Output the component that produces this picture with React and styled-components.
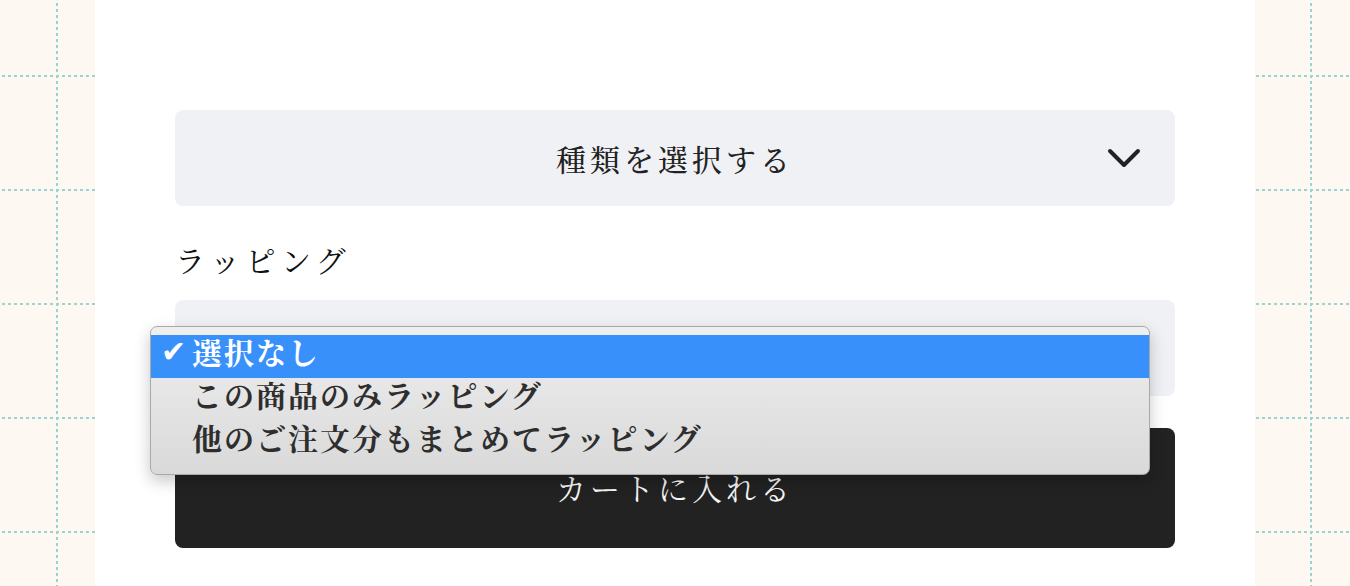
import React from 'react';
import styled, { createGlobalStyle } from 'styled-components';

const gridTile = encodeURIComponent(
  `<svg xmlns="http://www.w3.org/2000/svg" width="114" height="114">` +
    `<g stroke="#9ad4d1" stroke-width="2" stroke-dasharray="3 3" fill="none">` +
    `<line x1="1" y1="0" x2="1" y2="114"/>` +
    `<line x1="0" y1="1" x2="114" y2="1"/>` +
    `</g></svg>`
);

const GlobalStyle = createGlobalStyle`
  html, body {
    margin: 0;
    padding: 0;
  }
  body {
    background-color: #fdf8f1;
    background-image: url("data:image/svg+xml,${gridTile}");
    background-position: 56px 75px;
    font-family: "Noto Serif CJK JP", "Noto Sans CJK JP", serif;
    color: #222;
  }
`;

const Page = styled.div`
  display: flex;
  justify-content: center;
  min-height: 586px;
`;

const Panel = styled.main`
  width: 1160px;
  background: #fff;
  padding: 110px 80px 40px;
  box-sizing: border-box;
`;

const SelectBox = styled.div`
  position: relative;
  display: grid;
  grid-template-columns: 1fr auto 1fr;
  align-items: center;
  height: 96px;
  padding: 0 34px;
  box-sizing: border-box;
  background: #f0f1f5;
  border-radius: 8px;
  font-size: 30px;
  font-weight: 500;
  letter-spacing: 4px;
  color: #222;
`;

const SelectText = styled.span`
  grid-column: 2;
  line-height: 1;
`;

const Chevron = styled.svg`
  grid-column: 3;
  justify-self: end;
  width: 34px;
  height: 22px;
`;

const Label = styled.div`
  margin: 32px 0 20px 0;
  font-size: 30px;
  line-height: 42px;
  letter-spacing: 5.5px;
  color: #111;
`;

const Menu = styled.ul`
  position: absolute;
  top: 26px;
  left: -25px;
  width: 1000px;
  margin: 0;
  padding: 8px 0 10px;
  list-style: none;
  box-sizing: border-box;
  background: linear-gradient(#efefef, #d9d9d9);
  border: 1px solid #a9a9a9;
  border-radius: 7px;
  box-shadow: 0 6px 16px rgba(0, 0, 0, 0.22);
  z-index: 2;
  letter-spacing: 2px;
`;

const Option = styled.li`
  display: flex;
  align-items: center;
  height: 43px;
  padding: 0 0 11px 10px;
  box-sizing: border-box;
  font-size: 30px;
  font-weight: 700;
  color: ${(p) => (p.$active ? '#fff' : '#2e2e2e')};
  background: ${(p) => (p.$active ? '#3890fa' : 'transparent')};
`;

const Check = styled.span`
  display: inline-block;
  width: 31px;
  font-size: 30px;
  font-weight: 700;
  letter-spacing: 0;
  font-family: "DejaVu Sans", sans-serif;
`;

const CartButton = styled.button`
  display: flex;
  align-items: center;
  justify-content: center;
  width: 100%;
  height: 120px;
  margin-top: 32px;
  padding-bottom: 4px;
  border: none;
  border-radius: 8px;
  background: #222;
  color: #f4f4f4;
  font-family: inherit;
  font-size: 30px;
  letter-spacing: 4px;
`;

const options = ['選択なし', 'この商品のみラッピング', '他のご注文分もまとめてラッピング'];

function ChevronIcon() {
  return (
    <Chevron viewBox="0 0 34 22">
      <path d="M3 4 L17 18 L31 4" fill="none" stroke="#222" strokeWidth="4" strokeLinecap="round" strokeLinejoin="round" />
    </Chevron>
  );
}

export default function App() {
  return (
    <>
      <GlobalStyle />
      <Page>
        <Panel>
          <SelectBox>
            <SelectText>種類を選択する</SelectText>
            <ChevronIcon />
          </SelectBox>
          <Label>ラッピング</Label>
          <SelectBox>
            <Menu>
              {options.map((o, i) => (
                <Option key={o} $active={i === 0}>
                  <Check>{i === 0 ? '✔' : ''}</Check>
                  {o}
                </Option>
              ))}
            </Menu>
          </SelectBox>
          <CartButton>カートに入れる</CartButton>
        </Panel>
      </Page>
    </>
  );
}
